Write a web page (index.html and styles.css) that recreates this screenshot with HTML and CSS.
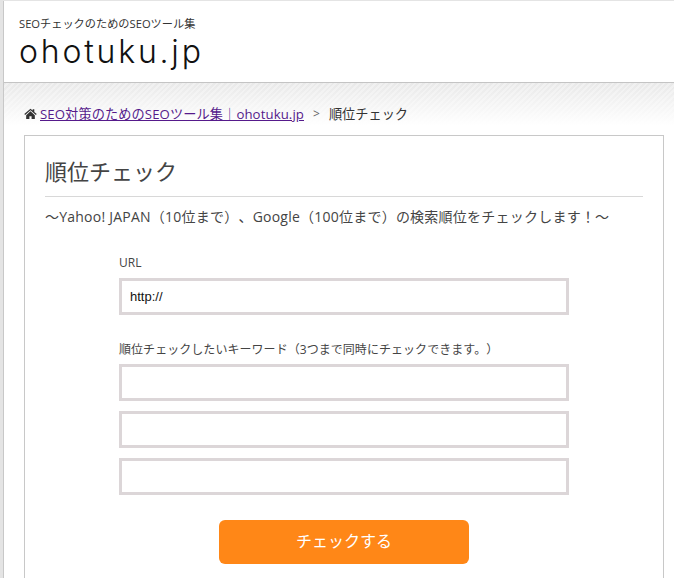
FILE: index.html
```html
<!DOCTYPE html>
<html lang="ja">
  <head>
    <meta charset="UTF-8" />
    <meta name="viewport" content="width=device-width, initial-scale=1.0" />
    <title>順位チェック</title>
    <link rel="stylesheet" href="styles.css">
  </head>
  <body>
    <div class="pageWrapp">
      <header class="siteHeader">
        <p class="tagline">SEOチェックのためのSEOツール集</p>
        <div class="logo">ohotuku.jp</div>
      </header>

      <div class="content">
        <div class="breadcrumb">
          <svg class="homeIcon" viewBox="0 0 24 24" aria-hidden="true">
            <path d="M12 3 0.5 13l1.6 1.8L12 6.2l9.9 8.6 1.6-1.8L19 9.1V4h-3v2.5z" />
            <path d="M12 8 4 15v7h6v-5h4v5h6v-7z" />
          </svg>
          <a href="#">SEO対策のためのSEOツール集｜ohotuku.jp</a>
          <span class="sep">&gt;</span>
          <span>順位チェック</span>
        </div>

        <main class="card">
          <h1>順位チェック</h1>
          <p class="lead">～Yahoo! JAPAN（10位まで）、Google（100位まで）の検索順位をチェックします！～</p>

          <form class="checkForm">
            <label for="url">URL</label>
            <input id="url" type="text" value="http://" />

            <label class="kwLabel" for="kw1">順位チェックしたいキーワード（3つまで同時にチェックできます。）</label>
            <input id="kw1" type="text" />
            <input type="text" />
            <input type="text" />

            <button type="button">チェックする</button>
          </form>
        </main>
      </div>
    </div>
  </body>
</html>
```

FILE: styles.css
```css
html,
body {
  height: 100%;
}

body {
  margin: 0;
  background-color: #e4e4e4;
  font-family: "Open Sans", "Noto Sans CJK JP", sans-serif;
  color: #333;
  overflow: hidden;
  text-spacing-trim: space-all;
}

.pageWrapp {
  height: calc(100% - 1px);
  margin: 1px 0 0 3px;
  border-left: 1px solid #c8c8c8;
  background-color: #fff;
  overflow: hidden;
}

.siteHeader {
  height: 82px;
  box-sizing: border-box;
  padding: 15px 0 0 15px;
  border-bottom: 1px solid #c4c4c4;
  background-color: #fff;
}

.tagline {
  margin: 0;
  font-size: 11.2px;
  line-height: 16px;
  color: #333;
}

.logo {
  margin-top: 2px;
  font-family: "Inter", sans-serif;
  font-size: 32px;
  font-weight: 300;
  line-height: 36px;
  letter-spacing: 2.8px;
  color: #111;
}

.content {
  padding: 0 10px 0 20px;
  background:
    linear-gradient(to bottom, rgba(255, 255, 255, 0), #fff 42px),
    repeating-linear-gradient(135deg, #e9e9e9 0, #e9e9e9 2px, #f0f0f0 2px, #f0f0f0 4px);
  background-repeat: no-repeat;
  background-size: 100% 60px;
}

.breadcrumb {
  display: flex;
  align-items: center;
  box-sizing: border-box;
  height: 52px;
  padding-top: 8px;
  font-size: 13.2px;
  color: #333;
}

.homeIcon {
  width: 13px;
  height: 13px;
  margin-right: 3px;
  fill: #333;
}

.breadcrumb a {
  color: #551a8b;
  letter-spacing: 0.1px;
}

.sep {
  margin: 0 9px;
  color: #666;
  font-size: 12px;
}

.card {
  box-sizing: border-box;
  width: 640px;
  height: 500px;
  padding: 19px 20px 0;
  border: 1px solid #c8c8c8;
  background-color: #fff;
}

h1 {
  margin: 0;
  padding-bottom: 9px;
  border-bottom: 1px solid #d8d8d8;
  font-size: 22px;
  font-weight: 400;
  line-height: 32px;
  color: #444;
}

.lead {
  margin: 10px 0 0;
  font-size: 14px;
  line-height: 20px;
  letter-spacing: 0.23px;
  color: #444;
}

.checkForm {
  display: flex;
  flex-direction: column;
  width: 450px;
  margin: 27px 0 0 74px;
}

label {
  font-size: 12px;
  line-height: 18px;
  letter-spacing: 0.05px;
  color: #444;
}

input {
  box-sizing: border-box;
  width: 450px;
  height: 37px;
  margin: 0 0 10px;
  padding: 0 8px;
  border: 3px solid #dcd6d8;
  font-family: "Liberation Sans", sans-serif;
  font-size: 13px;
  color: #111;
  outline: none;
}

#url {
  margin-top: 6px;
}

.kwLabel {
  margin-top: 16px;
}

#kw1 {
  margin-top: 5px;
}

button {
  align-self: center;
  width: 250px;
  height: 44px;
  margin-top: 15px;
  padding: 0 0 4px;
  border: 0;
  border-radius: 6px;
  background-color: #ff8717;
  color: #fff;
  font-family: inherit;
  font-size: 16px;
}
```
